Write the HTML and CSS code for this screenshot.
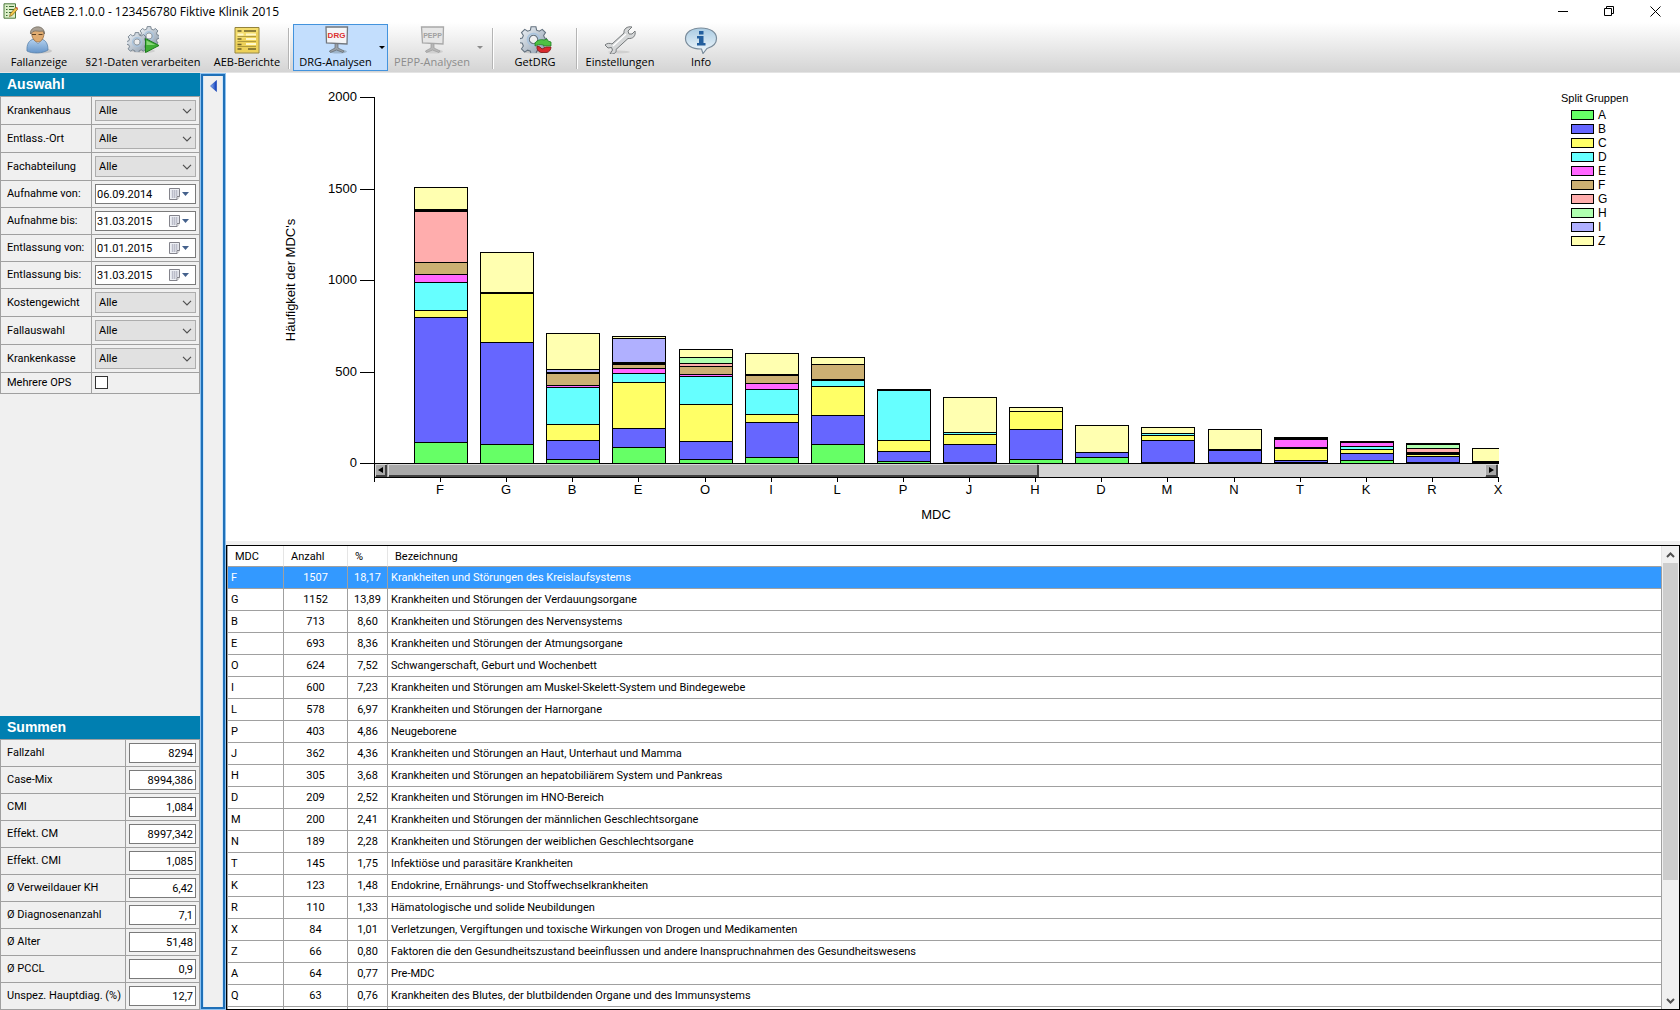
FILE: index.html
```html
<!DOCTYPE html>
<html lang="de">
<head>
  <meta charset="UTF-8">
  <title>GetAEB 2.1.0.0 - 123456780 Fiktive Klinik 2015</title>
  <link rel="stylesheet" href="styles.css">
</head>
<body>
  <!-- Gemeinsame Symbole -->
  <svg class="defs" width="0" height="0" aria-hidden="true">
    <defs>
      <linearGradient id="gearFill" x1="0" y1="0" x2="1" y2="1">
        <stop offset="0" stop-color="#f2f6fa"/><stop offset="1" stop-color="#8797a8"/>
      </linearGradient>
      <linearGradient id="blueFill" x1="0" y1="0" x2="0" y2="1">
        <stop offset="0" stop-color="#b5d2ef"/><stop offset="1" stop-color="#6695c9"/>
      </linearGradient>
      <linearGradient id="bubbleFill" x1="0" y1="0" x2="0" y2="1">
        <stop offset="0" stop-color="#a9cbe2"/><stop offset="1" stop-color="#f3f9fd"/>
      </linearGradient>
      <linearGradient id="arrowFill" x1="0" y1="0" x2="1" y2="0">
        <stop offset="0" stop-color="#8fb8f5"/><stop offset="1" stop-color="#0a35b5"/>
      </linearGradient>
    </defs>
    <symbol id="gear" viewBox="-10 -10 20 20">
      <path fill="url(#gearFill)" stroke="#64727f" stroke-width=".8" fill-rule="evenodd" d="M-1.8-9.4h3.6l.5 2.5 2 .8 2.2-1.4 2.4 2.4-1.4 2.1.8 2 2.2.5v2.8l-2.2.5-.8 2 1.4 2.1-2.4 2.4-2.2-1.4-2 .8-.5 2.3h-3.6l-.5-2.3-2-.8-2.2 1.4-2.4-2.4 1.4-2.1-.8-2-2.2-.5v-2.8l2.2-.5.8-2-1.4-2.1 2.4-2.4 2.2 1.4 2-.8zM0-3.1a3.1 3.1 0 1 0 .01 0z"/>
      <circle r="4.4" fill="none" stroke="#a9c4de" stroke-width="1.2"/>
    </symbol>
    <symbol id="chevron" viewBox="0 0 10 6"><path d="M1 .8l4 4 4-4" fill="none" stroke="#505050" stroke-width="1.2"/></symbol>
    <symbol id="calendar" viewBox="0 0 21 12">
      <path d="M.5.5h10v8l-2.500 3h-7.500z" fill="#eef0f5" stroke="#83838b"/>
      <path d="M2.500 3h7M2.500 5h7M2.500 7h7M2.500 9h5M3.500 2v8M5.500 2v8M7.500 2v6" stroke="#b4b6c4" stroke-width=".8"/>
      <path d="M8 11.500v-3h2.500" fill="#fff" stroke="#83838b"/>
      <path d="M13 4h7l-3.500 4z" fill="#44618c"/>
    </symbol>
  </svg>

  <header class="titlebar">
    <svg class="app-icon" viewBox="0 0 15 16">
      <path d="M1 .8h11.500v14.400h-11.500z" fill="#dcefc9" stroke="#4d7a3e"/>
      <path d="M3 3.500h1.500M6 3.500h5M3 6.500h1.500M6 6.500h5M3 9.500h1.500M6 9.500h3M3 12.500h1.500" stroke="#37682d" stroke-width="1.200"/>
      <path d="M6.500 13.500l.8-2.800 5.400-6.200 2 1.700-5.500 6.200z" fill="#f2c94a" stroke="#7c5a23" stroke-width=".7"/>
      <path d="M12.600 4.500l2 1.700.4-1.100-1.300-1.200z" fill="#d9503f"/>
    </svg>
    <h1 class="title">GetAEB 2.1.0.0 - 123456780 Fiktive Klinik 2015</h1>
    <div class="window-buttons">
      <button type="button" aria-label="Minimieren"><svg viewBox="0 0 11 11"><path d="M0 5.500h10" stroke="#000"/></svg></button>
      <button type="button" aria-label="Wiederherstellen"><svg viewBox="0 0 11 11"><path d="M.5 2.500h7v7h-7zM2.500 2.500v-2h7v7h-2" fill="none" stroke="#000"/></svg></button>
      <button type="button" aria-label="Schließen"><svg viewBox="0 0 11 11"><path d="M.5.5l10 10M10.500.5l-10 10" stroke="#000"/></svg></button>
    </div>
  </header>

  <nav class="toolbar">
    <button type="button" class="tool">
      <svg viewBox="0 0 28 28">
        <ellipse cx="16" cy="25" rx="11" ry="2.500" fill="#c8c8c8"/>
        <path d="M2 25c-.5-7 2-11 7-12h7c5 1 7 5 7 11-5 3.500-16 4-21 1z" fill="url(#blueFill)" stroke="#5881ab" stroke-width=".8"/>
        <path d="M9 13l4 5 4-5" fill="#e9f1f9" stroke="#6d8fb5" stroke-width=".7"/>
        <path d="M6.500 6c0-4 12-5 12.500 0 .3 5-2 10-6 10s-6.500-5-6.500-10z" fill="#e0ab70" stroke="#8b6238" stroke-width=".7"/>
        <path d="M5.500 8c-1.500-8 14-11 14 0l-1.500-3c-4 1-7-1-10 .5z" fill="#a9a094" stroke="#6d655a" stroke-width=".7"/>
        <path d="M7 8.500h4M13.500 8.500h4" stroke="#5d4326"/>
      </svg>
      <span>Fallanzeige</span>
    </button>
    <button type="button" class="tool">
      <svg class="wide" viewBox="0 0 34 28">
        <ellipse cx="17" cy="25" rx="12" ry="2" fill="#cfcfcf"/>
        <use href="#gear" x="13" y="0" width="20" height="20"/>
        <use href="#gear" x="1" y="6" width="20" height="20"/>
        <path d="M19.500 12.500l13.500 7-13.500 7z" fill="#3fae35" stroke="#1c7a1c"/>
        <path d="M20.500 14.500l9 4.500h-9z" fill="#86d677"/>
      </svg>
      <span>§21-Daten verarbeiten</span>
    </button>
    <button type="button" class="tool">
      <svg viewBox="0 0 28 28">
        <path d="M2 1.500h24v25.500h-24z" fill="#f3dc6c" stroke="#94833a"/>
        <path d="M3 16l22-10v20h-22z" fill="#e9ca4c" opacity=".6"/>
        <path d="M4.500 5h4M11 5h12M4.500 13h4M4.500 18.500h4M4.500 23h4M15 23h8" stroke="#6e6128" stroke-width="1.300"/>
        <path d="M4.500 8.500h6M13 8.500h10M13 13h10M13 18h10" stroke="#fff8c9" stroke-width="2.200"/>
        <path d="M4.500 10.500h18.500M4.500 15.500h18.500M4.500 20.500h18.500" stroke="#a08d36" stroke-width=".8"/>
      </svg>
      <span>AEB-Berichte</span>
    </button>
    <i class="divider"></i>
    <button type="button" class="tool split active">
      <svg viewBox="0 0 28 28">
        <ellipse cx="16" cy="25.500" rx="9" ry="2" fill="#9fb6cc"/>
        <path d="M13 17h3v5l6 3-1 1.500-6.500-2.500-6 2.500-1-1.500 5.500-3z" fill="#9aa0a6" stroke="#62686e" stroke-width=".7"/>
        <path d="M4 1h21.500l-.5 17-20.500-1z" fill="#f4f5f7" stroke="#72777e" stroke-width="1.300"/>
        <text class="board red" x="14.500" y="11.500">DRG</text>
      </svg>
      <span>DRG-Analysen</span>
      <b class="caret"></b>
    </button>
    <button type="button" class="tool split" disabled>
      <svg viewBox="0 0 28 28">
        <ellipse cx="16" cy="25.500" rx="9" ry="2" fill="#d0d0d0"/>
        <path d="M13 17h3v5l6 3-1 1.500-6.500-2.500-6 2.500-1-1.500 5.500-3z" fill="#b9b9b9" stroke="#9a9a9a" stroke-width=".7"/>
        <path d="M3.500 1h22l-.5 17-20.500-1z" fill="#e6e6e6" stroke="#a8a8a8" stroke-width="1.300"/>
        <text class="board gray" x="14.500" y="12">PEPP</text>
      </svg>
      <span>PEPP-Analysen</span>
      <b class="caret"></b>
    </button>
    <i class="divider"></i>
    <button type="button" class="tool">
      <svg class="wide" viewBox="0 0 34 28">
        <ellipse cx="17" cy="25.500" rx="12" ry="2" fill="#c6c6c6"/>
        <use href="#gear" x="2" y="0" width="27" height="27"/>
        <path d="M17 20v-3c2-3 6-4 9-3l3-1 1 2 3 1v4h-6l-2-1c-3-1-6 0-8 1z" fill="#4fc143" stroke="#1f7f22" stroke-width=".8"/>
        <path d="M19 20l3 1 2 2 4-2h5c0 3-2 5-4 5.500h-6c-3-1-4.500-3-4-6.500z" fill="#d8292c" stroke="#7d1618" stroke-width=".8"/>
      </svg>
      <span>GetDRG</span>
    </button>
    <i class="divider"></i>
    <button type="button" class="tool">
      <svg class="wide" viewBox="0 0 34 28">
        <ellipse cx="16" cy="26" rx="11" ry="1.500" fill="#d0d0d0"/>
        <path d="M2 19c2-2 5-2 7-1l12-11c-.5-4 3-7 8-6l-4 4 1 3 3 0 3-3c1 5-2 8-7 7.500l-12 11c1 3-2 5-6 4.500l2.500-4-1-2.500-3.500.5z" fill="#d5d7d8" stroke="#74787a"/>
        <path d="M10 20l13-12" stroke="#fff" stroke-width="1.300"/>
      </svg>
      <span>Einstellungen</span>
    </button>
    <button type="button" class="tool">
      <svg class="wide" viewBox="0 0 34 28">
        <path d="M17 2c9 0 15.500 4 15.500 10.500 0 5-4 8.500-9.500 10l-4 5-1.500-4.500c-10 0-16-4-16-10.500s6.500-10.500 15.500-10.500z" fill="url(#bubbleFill)" stroke="#7a8c9b" stroke-width="1.200"/>
        <path d="M15 5h4.500v3.500h-4.500zM13 10h6.500v7h2v2.500h-8.500v-2.500h2v-4.500h-2z" fill="#235f9e"/>
      </svg>
      <span>Info</span>
    </button>
  </nav>

  <div class="workspace">
    <aside class="sidebar">
      <section>
        <h2 class="panel-title">Auswahl</h2>
        <div class="filters">
          <div class="row combo"><label for="krankenhaus">Krankenhaus</label><div class="cell"><select id="krankenhaus"><option>Alle</option></select><svg><use href="#chevron"/></svg></div></div>
          <div class="row combo"><label for="ort">Entlass.-Ort</label><div class="cell"><select id="ort"><option>Alle</option></select><svg><use href="#chevron"/></svg></div></div>
          <div class="row combo"><label for="abteilung">Fachabteilung</label><div class="cell"><select id="abteilung"><option>Alle</option></select><svg><use href="#chevron"/></svg></div></div>
          <div class="row date"><label for="aufvon">Aufnahme von:</label><div class="cell"><input type="text" id="aufvon" value="06.09.2014"><svg><use href="#calendar"/></svg></div></div>
          <div class="row date"><label for="aufbis">Aufnahme bis:</label><div class="cell"><input type="text" id="aufbis" value="31.03.2015"><svg><use href="#calendar"/></svg></div></div>
          <div class="row date"><label for="entvon">Entlassung von:</label><div class="cell"><input type="text" id="entvon" value="01.01.2015"><svg><use href="#calendar"/></svg></div></div>
          <div class="row date"><label for="entbis">Entlassung bis:</label><div class="cell"><input type="text" id="entbis" value="31.03.2015"><svg><use href="#calendar"/></svg></div></div>
          <div class="row combo"><label for="gewicht">Kostengewicht</label><div class="cell"><select id="gewicht"><option>Alle</option></select><svg><use href="#chevron"/></svg></div></div>
          <div class="row combo"><label for="fall">Fallauswahl</label><div class="cell"><select id="fall"><option>Alle</option></select><svg><use href="#chevron"/></svg></div></div>
          <div class="row combo"><label for="kasse">Krankenkasse</label><div class="cell"><select id="kasse"><option>Alle</option></select><svg><use href="#chevron"/></svg></div></div>
          <div class="row check"><label for="ops">Mehrere OPS</label><div class="cell"><input type="checkbox" id="ops"></div></div>
        </div>
      </section>
      <section>
        <h2 class="panel-title">Summen</h2>
        <div class="sums">
          <div class="row"><label for="s1">Fallzahl</label><div class="cell"><input type="text" id="s1" value="8294" readonly></div></div>
          <div class="row"><label for="s2">Case-Mix</label><div class="cell"><input type="text" id="s2" value="8994,386" readonly></div></div>
          <div class="row"><label for="s3">CMI</label><div class="cell"><input type="text" id="s3" value="1,084" readonly></div></div>
          <div class="row"><label for="s4">Effekt. CM</label><div class="cell"><input type="text" id="s4" value="8997,342" readonly></div></div>
          <div class="row"><label for="s5">Effekt. CMI</label><div class="cell"><input type="text" id="s5" value="1,085" readonly></div></div>
          <div class="row"><label for="s6">Ø Verweildauer KH</label><div class="cell"><input type="text" id="s6" value="6,42" readonly></div></div>
          <div class="row"><label for="s7">Ø Diagnosenanzahl</label><div class="cell"><input type="text" id="s7" value="7,1" readonly></div></div>
          <div class="row"><label for="s8">Ø Alter</label><div class="cell"><input type="text" id="s8" value="51,48" readonly></div></div>
          <div class="row"><label for="s9">Ø PCCL</label><div class="cell"><input type="text" id="s9" value="0,9" readonly></div></div>
          <div class="row"><label for="s10">Unspez. Hauptdiag. (%)</label><div class="cell"><input type="text" id="s10" value="12,7" readonly></div></div>
        </div>
      </section>
    </aside>

    <button type="button" class="splitter" aria-label="Einklappen">
      <svg viewBox="0 0 7 12"><path d="M6.500.5v11l-6-5.500z" fill="url(#arrowFill)" stroke="#1b49b8" stroke-width=".6"/></svg>
    </button>

    <main class="content">
      <section class="chart-panel">
        <svg class="chart" id="chart"></svg>
        <div class="legend">
          <h3>Split Gruppen</h3>
          <ul>
            <li><i class="swatch gA"></i>A</li>
            <li><i class="swatch gB"></i>B</li>
            <li><i class="swatch gC"></i>C</li>
            <li><i class="swatch gD"></i>D</li>
            <li><i class="swatch gE"></i>E</li>
            <li><i class="swatch gF"></i>F</li>
            <li><i class="swatch gG"></i>G</li>
            <li><i class="swatch gH"></i>H</li>
            <li><i class="swatch gI"></i>I</li>
            <li><i class="swatch gZ"></i>Z</li>
          </ul>
        </div>
      </section>

      <section class="grid">
        <div class="grid-view">
          <table>
            <colgroup><col class="c-mdc"><col class="c-num"><col class="c-pct"><col></colgroup>
            <thead>
              <tr><th>MDC</th><th>Anzahl</th><th>%</th><th>Bezeichnung</th></tr>
            </thead>
            <tbody>
              <tr class="selected"><td>F</td><td>1507</td><td>18,17</td><td>Krankheiten und Störungen des Kreislaufsystems</td></tr>
              <tr><td>G</td><td>1152</td><td>13,89</td><td>Krankheiten und Störungen der Verdauungsorgane</td></tr>
              <tr><td>B</td><td>713</td><td>8,60</td><td>Krankheiten und Störungen des Nervensystems</td></tr>
              <tr><td>E</td><td>693</td><td>8,36</td><td>Krankheiten und Störungen der Atmungsorgane</td></tr>
              <tr><td>O</td><td>624</td><td>7,52</td><td>Schwangerschaft, Geburt und Wochenbett</td></tr>
              <tr><td>I</td><td>600</td><td>7,23</td><td>Krankheiten und Störungen am Muskel-Skelett-System und Bindegewebe</td></tr>
              <tr><td>L</td><td>578</td><td>6,97</td><td>Krankheiten und Störungen der Harnorgane</td></tr>
              <tr><td>P</td><td>403</td><td>4,86</td><td>Neugeborene</td></tr>
              <tr><td>J</td><td>362</td><td>4,36</td><td>Krankheiten und Störungen an Haut, Unterhaut und Mamma</td></tr>
              <tr><td>H</td><td>305</td><td>3,68</td><td>Krankheiten und Störungen an hepatobiliärem System und Pankreas</td></tr>
              <tr><td>D</td><td>209</td><td>2,52</td><td>Krankheiten und Störungen im HNO-Bereich</td></tr>
              <tr><td>M</td><td>200</td><td>2,41</td><td>Krankheiten und Störungen der männlichen Geschlechtsorgane</td></tr>
              <tr><td>N</td><td>189</td><td>2,28</td><td>Krankheiten und Störungen der weiblichen Geschlechtsorgane</td></tr>
              <tr><td>T</td><td>145</td><td>1,75</td><td>Infektiöse und parasitäre Krankheiten</td></tr>
              <tr><td>K</td><td>123</td><td>1,48</td><td>Endokrine, Ernährungs- und Stoffwechselkrankheiten</td></tr>
              <tr><td>R</td><td>110</td><td>1,33</td><td>Hämatologische und solide Neubildungen</td></tr>
              <tr><td>X</td><td>84</td><td>1,01</td><td>Verletzungen, Vergiftungen und toxische Wirkungen von Drogen und Medikamenten</td></tr>
              <tr><td>Z</td><td>66</td><td>0,80</td><td>Faktoren die den Gesundheitszustand beeinflussen und andere Inanspruchnahmen des Gesundheitswesens</td></tr>
              <tr><td>A</td><td>64</td><td>0,77</td><td>Pre-MDC</td></tr>
              <tr><td>Q</td><td>63</td><td>0,76</td><td>Krankheiten des Blutes, der blutbildenden Organe und des Immunsystems</td></tr>
              <tr><td></td><td></td><td></td><td></td></tr>
            </tbody>
          </table>
        </div>
        <div class="scrollbar">
          <button type="button" aria-label="Nach oben"><svg viewBox="0 0 9 6"><path d="M1 5l3.500-3.500 3.500 3.500" fill="none" stroke="#505050" stroke-width="2"/></svg></button>
          <div class="track"><div class="thumb"></div></div>
          <button type="button" aria-label="Nach unten"><svg viewBox="0 0 9 6"><path d="M1 1l3.500 3.500 3.500-3.500" fill="none" stroke="#505050" stroke-width="2"/></svg></button>
        </div>
      </section>
    </main>
  </div>

  <script src="chart.js"></script>
</body>
</html>
```
FILE: styles.css
```css
* {
  box-sizing: border-box;
}
body {
  margin: 0;
  height: 100vh;
  display: flex;
  flex-direction: column;
  overflow: hidden;
  background: #fff;
  color: #000;
  font-family: "Liberation Sans", Arial, sans-serif;
  font-size: 11px;
}
button, input, select {
  font: inherit;
  color: inherit;
}
.defs {
  position: absolute;
}

/* Titelleiste */
.titlebar {
  display: flex;
  align-items: center;
  flex: none;
  height: 22px;
  padding-left: 3px;
}
.app-icon {
  width: 15px;
  height: 16px;
}
.title {
  flex: 1;
  margin: 0 0 0 5px;
  font-family: "Open Sans", "Noto Sans", sans-serif;
  font-size: 12px;
  font-weight: normal;
}
.window-buttons {
  display: flex;
  padding-right: 2px;
}
.window-buttons button {
  width: 46px;
  height: 20px;
  padding: 0;
  border: 0;
  background: none;
}
.window-buttons svg {
  display: block;
  width: 11px;
  height: 11px;
  margin: 0 auto;
}

/* Symbolleiste */
.toolbar {
  display: grid;
  grid-template-columns: 74px 134px 74px 9px 95px 98px 14px 70px 14px 72px 90px;
  flex: none;
  height: 51px;
  padding: 2px;
  background: linear-gradient(#fff, #d4d4d4);
  border-bottom: 1px solid #e4e4e4;
  font-family: "Open Sans", "Noto Sans", sans-serif;
  font-size: 11px;
}
.tool {
  position: relative;
  display: flex;
  flex-direction: column;
  align-items: center;
  padding: 1px 0 0;
  border: 1px solid transparent;
  background: none;
  white-space: nowrap;
  line-height: 16px;
}
.tool svg {
  flex: none;
  width: 28px;
  height: 28px;
}
.tool svg.wide {
  width: 34px;
}
.tool.split {
  padding-right: 10px;
}
.tool.active {
  background: #c3defd;
  border-color: #4393dd;
}
.tool:disabled {
  color: #8c8c8c;
}
.caret {
  position: absolute;
  right: 2px;
  top: 21px;
  border: 3px solid transparent;
  border-top-color: currentColor;
  border-bottom: 0;
}
.board {
  font-family: "Liberation Sans", Arial, sans-serif;
  font-weight: bold;
  font-size: 8px;
  text-anchor: middle;
}
.board.red {
  fill: #dc3030;
}
.board.gray {
  font-size: 7px;
  fill: #a0a0a0;
}
.divider {
  width: 2px;
  height: 41px;
  margin: 4px auto 0;
  background: #b4b4b4;
  border-right: 1px solid #fff;
}

/* Arbeitsbereich */
.workspace {
  display: flex;
  flex: 1;
  min-height: 0;
}
.sidebar {
  display: flex;
  flex-direction: column;
  justify-content: space-between;
  width: 200px;
  background: #f0f0f0;
}
.panel-title {
  height: 23px;
  margin: 0;
  padding-left: 7px;
  background: #007fb1;
  color: #fff;
  font-size: 14px;
  line-height: 23px;
}
.filters, .sums, .grid {
  font-family: Roboto, "Liberation Sans", sans-serif;
}
.filters, .sums {
  border: 1px solid #a0a0a0;
  border-bottom: 0;
}
.row {
  display: flex;
  height: 27px;
  border-bottom: 1px solid #a0a0a0;
}
.row.combo {
  height: 28px;
}
.row.check {
  height: 21px;
}
.row label {
  flex: none;
  width: 91px;
  padding-left: 6px;
  border-right: 1px solid #a0a0a0;
  line-height: 26px;
  white-space: nowrap;
}
.row.combo label {
  line-height: 28px;
}
.row.check label {
  line-height: 20px;
}
.sums .row label {
  width: 125px;
}
.cell {
  position: relative;
  flex: 1;
  padding: 3px;
}
.cell input, .cell select {
  display: block;
  width: 100%;
  height: 20px;
  padding: 0 2px;
  border: 1px solid #7a7a7a;
  border-radius: 0;
  background: #fff;
  appearance: none;
}
.cell select {
  height: 21px;
  padding-left: 3px;
  border-color: #adadad;
  background: #e1e1e1;
}
.cell svg {
  position: absolute;
  right: 7px;
  top: 11px;
  width: 10px;
  height: 6px;
  pointer-events: none;
}
.date .cell input {
  padding-left: 1px;
}
.date .cell svg {
  right: 9px;
  top: 7px;
  width: 21px;
  height: 12px;
}
.sums input {
  text-align: right;
}
.check .cell input {
  width: 13px;
  height: 13px;
  margin: 0;
  border-color: #333;
}

.splitter {
  display: flex;
  align-items: flex-start;
  flex: none;
  width: 26px;
  padding: 4px 0 0 7px;
  border: 3px solid #1f70b8;
  background: #f0f0f0;
  box-shadow: inset 1px 0 #cfe6fa, inset -1px 0 #cfe6fa;
  outline: 1px solid #8fc3f0;
  outline-offset: -1px;
}
.splitter svg {
  display: block;
  width: 7px;
  height: 12px;
}

/* Diagramm */
.content {
  flex: 1;
  min-width: 0;
  display: flex;
  flex-direction: column;
}
.chart-panel {
  display: flex;
  flex: none;
  height: 472px;
  border-bottom: 4px solid #f0f0f0;
}
.chart {
  flex: 1;
  min-width: 0;
  height: 468px;
  font-size: 13px;
}
.axis {
  stroke: #000;
  fill: none;
}
.tick-y {
  text-anchor: end;
}
.tick-x, .caption {
  text-anchor: middle;
}
.bar rect {
  stroke: #000;
}
.track-x { fill: #d3d3d3; }
.thumb-x { fill: #a9a9a9; }
.bevel-light { stroke: #d8d8d8; fill: none; }
.bevel-dark { stroke: #404040; stroke-width: 2; fill: none; }

.legend {
  flex: none;
  width: 119px;
  padding-top: 18px;
}
.legend h3 {
  margin: 0;
  font-size: 11px;
  font-weight: normal;
  line-height: 14px;
}
.legend ul {
  margin: 3px 0 0;
  padding: 0 0 0 10px;
  list-style: none;
}
.legend li {
  display: flex;
  align-items: center;
  gap: 4px;
  height: 14px;
  font-size: 12px;
}
.swatch {
  width: 23px;
  height: 10px;
  border: 1px solid #000;
}
.gA { background: #66ff66; fill: #66ff66; }
.gB { background: #6666ff; fill: #6666ff; }
.gC { background: #ffff66; fill: #ffff66; }
.gD { background: #66ffff; fill: #66ffff; }
.gE { background: #ff66ff; fill: #ff66ff; }
.gF { background: #ccb073; fill: #ccb073; }
.gG { background: #ffadad; fill: #ffadad; }
.gH { background: #b0ffb0; fill: #b0ffb0; }
.gI { background: #b0b0ff; fill: #b0b0ff; }
.gZ { background: #ffffb0; fill: #ffffb0; }

/* Tabelle */
.grid {
  display: flex;
  flex: 1;
  min-height: 0;
  border: 1px solid #000;
}
.grid-view {
  flex: 1;
  min-width: 0;
  overflow: hidden;
  border-left: 1px solid #a0a0a0;
}
table {
  width: 100%;
  table-layout: fixed;
  border-collapse: separate;
  border-spacing: 0;
}
.c-mdc { width: 56px; }
.c-num { width: 64px; }
.c-pct { width: 40px; }
th, td {
  height: 22px;
  padding: 0 3px;
  border-right: 1px solid #a0a0a0;
  border-bottom: 1px solid #a0a0a0;
  white-space: nowrap;
}
th {
  height: 21px;
  padding: 1px 0 0 7px;
  border-right-color: #e5e5e5;
  font-weight: normal;
  text-align: left;
}
td:nth-child(2), td:nth-child(3) {
  text-align: center;
}
.selected td {
  background: #3399ff;
  color: #fff;
}
.scrollbar {
  display: flex;
  flex-direction: column;
  width: 17px;
  padding: 0 1px;
  background: #f0f0f0;
}
.scrollbar button {
  height: 17px;
  padding: 0;
  border: 0;
  background: none;
}
.scrollbar svg {
  display: block;
  width: 9px;
  height: 6px;
  margin: 0 auto;
}
.track {
  flex: 1;
}
.thumb {
  height: 74%;
  background: #cdcdcd;
}
```
FILE: chart.js
```js
// Oberkante jedes Segments in Pixel über der Nulllinie
const bars = [
  ['F', 'A21 B146 C153 D181 E189 F201 G252 H253 I254 Z276'],
  ['G', 'A19 B121 C170 D171 Z211'],
  ['B', 'A4 B23 C39 D76 E78 F90 G91 I94 Z130'],
  ['E', 'A16 B35 C81 D90 E95 F99 G100 H101 I125 Z127'],
  ['O', 'A4 B22 C59 D87 E89 F97 G100 H106 Z114'],
  ['I', 'A6 B41 C49 D74 E80 F88 G89 Z110'],
  ['L', 'A19 B48 C77 D83 E84 F99 Z106'],
  ['P', 'A2 B12 C23 D73 Z74'],
  ['J', 'A1 B19 C29 D31 Z66'],
  ['H', 'A4 B34 C52 Z56'],
  ['D', 'A6 B11 Z38'],
  ['M', 'A1 B23 C28 D30 Z36'],
  ['N', 'A1 B13 C14 Z34'],
  ['T', 'A1 B3 C15 D16 E24 F25 Z26'],
  ['K', 'A3 B10 C14 D17 E21 Z22'],
  ['R', 'A1 B7 C9 D10 E11 G15 H19 Z20'],
  ['X', 'A1 C2 Z15']
];

const svg = document.getElementById('chart');
const left = 148;
const top0 = 24;
const base = 390;
const bottom = 404;

function drawChart() {
  const right = svg.clientWidth - 63;
  const step = (right - left) / bars.length;
  const thumbEnd = left + Math.round((right - left) * 0.591);
  let out = `<clipPath id="plot"><rect x="${left}" y="0" width="${right - left + 1}" height="${base + 1}"/></clipPath>`;

  // Balken
  out += '<g clip-path="url(#plot)">';
  bars.forEach(([name, parts], i) => {
    const x = Math.round(left + step * (i + 1)) - 26;
    let y = 0;
    out += '<g class="bar">';
    parts.split(' ').forEach(part => {
      const h = Number(part.slice(1));
      out += `<rect class="g${part[0]}" x="${x + 0.5}" y="${base - h + 0.5}" width="53" height="${h - y}"/>`;
      y = h;
    });
    out += '</g>';
  });
  out += '</g>';

  // Bildlaufleiste unter den Balken
  out += `<rect class="track-x" x="${left}" y="${base}" width="${right - left}" height="14"/>`;
  out += `<rect class="thumb-x" x="${left}" y="${base}" width="${thumbEnd - left}" height="14"/>`;
  out += `<rect class="thumb-x" x="${right - 13}" y="${base}" width="13" height="14"/>`;
  out += `<path class="bevel-light" d="M${left + 1.5} 403v-11.500h11M${left + 14.5} 403v-11.500H${thumbEnd - 1}M${right - 12.5} 403v-11.500h11"/>`;
  out += `<path class="bevel-dark" d="M${left + 2} 403h10v-11M${left + 15} 403H${thumbEnd}v-11M${right - 12} 403h11v-11"/>`;
  out += `<path d="M${left + 9} 394v6l-5-3zM${right - 9} 394v6l5-3z"/>`;

  // Achsen
  out += `<path class="axis" d="M${left + 0.5} ${top0}V${bottom + 5}M${left} ${base + 0.5}H${right}M${left} ${bottom + 0.5}H${right}"/>`;
  [2000, 1500, 1000, 500, 0].forEach(value => {
    const y = Math.round(base - value * 0.183);
    out += `<path class="axis" d="M${left - 14} ${y + 0.5}h14"/>`;
    out += `<text class="tick-y" x="${left - 17}" y="${y + 4}">${value}</text>`;
  });
  bars.forEach(([name], i) => {
    const x = Math.round(left + step * (i + 1));
    out += `<path class="axis" d="M${x + 0.5} ${bottom}v5"/>`;
    out += `<text class="tick-x" x="${x}" y="421">${name}</text>`;
  });
  out += `<text class="caption" x="${(left + right) / 2}" y="446">MDC</text>`;
  out += `<text class="caption" transform="translate(69 207) rotate(-90)">Häufigkeit der MDC's</text>`;
  svg.innerHTML = out;
}

drawChart();
window.addEventListener('resize', drawChart);
```
